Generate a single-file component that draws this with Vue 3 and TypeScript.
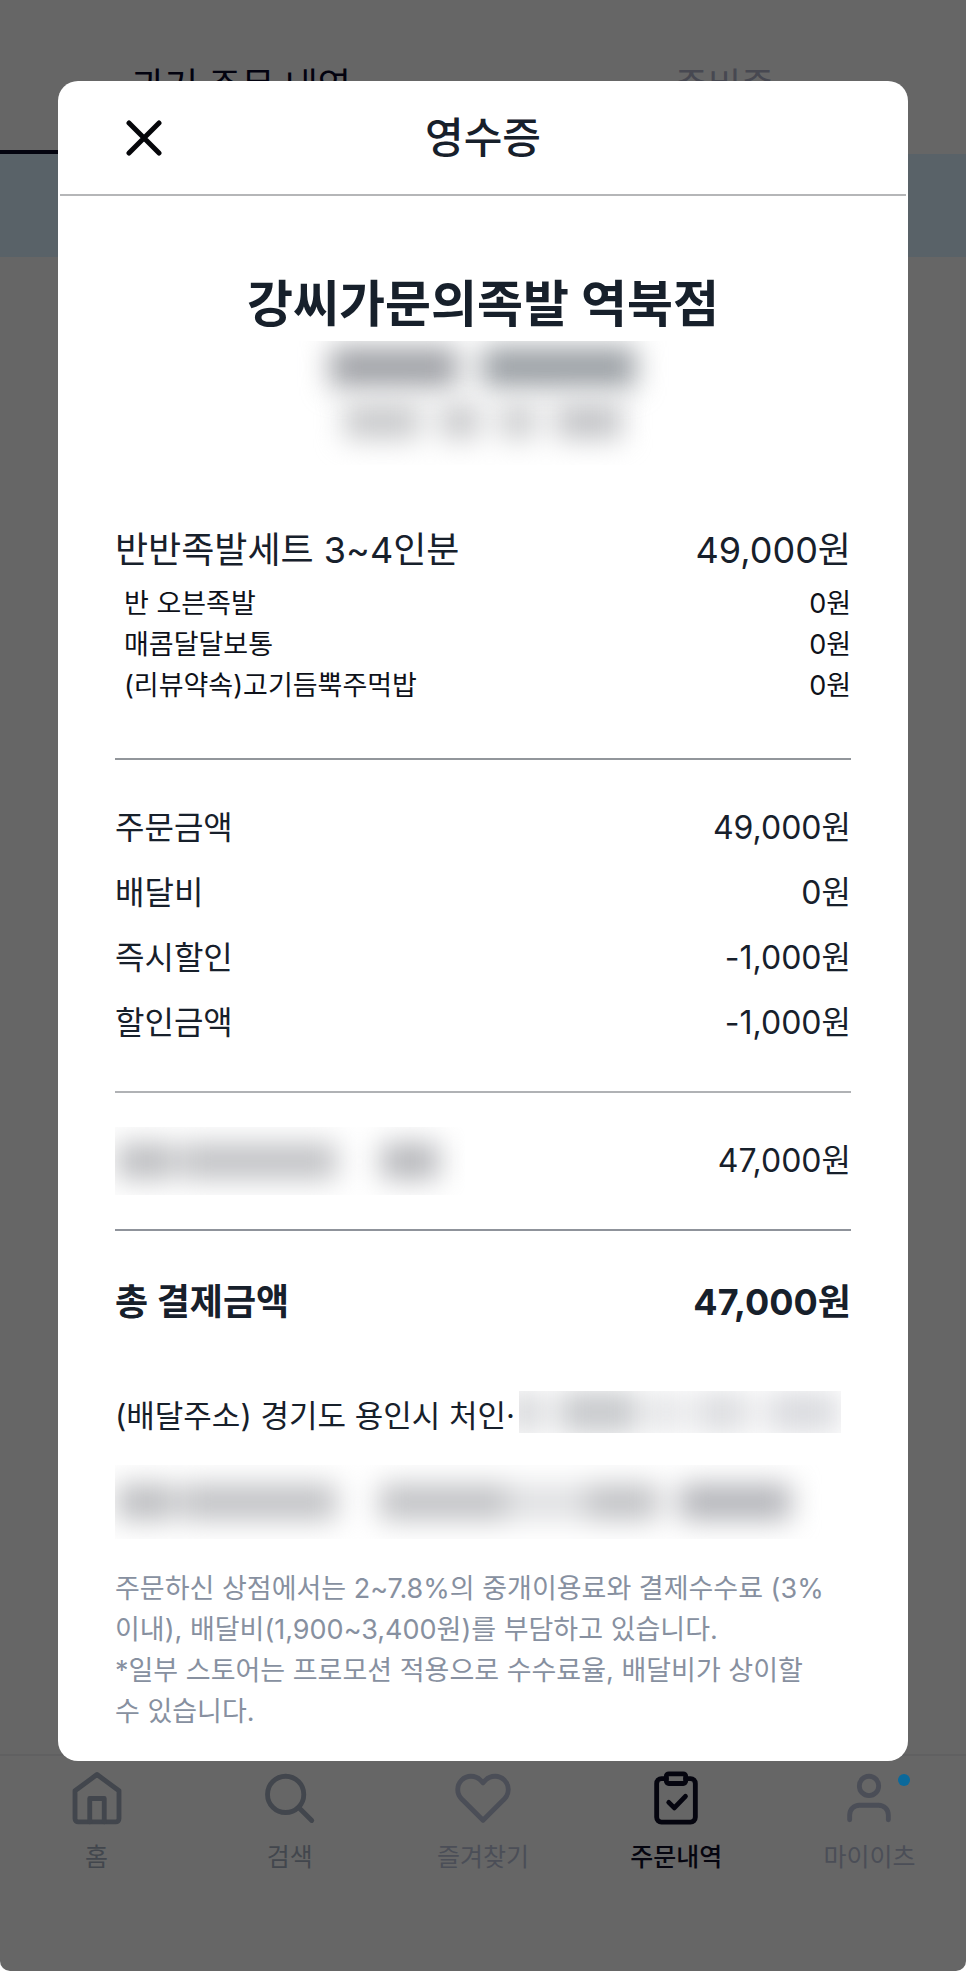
<script setup lang="ts">
interface Row { label: string; price: string }
interface Smudge { gap: number; width: number; shade: string }

const options: Row[] = [
  { label: '반 오븐족발', price: '0원' },
  { label: '매콤달달보통', price: '0원' },
  { label: '(리뷰약속)고기듬뿍주먹밥', price: '0원' },
]

const summary: Row[] = [
  { label: '주문금액', price: '49,000원' },
  { label: '배달비', price: '0원' },
  { label: '즉시할인', price: '-1,000원' },
  { label: '할인금액', price: '-1,000원' },
]

// Masked personal details, drawn as blurred bars
const orderNumber: Smudge[] = [
  { gap: 0, width: 128, shade: '#9fa1a6' },
  { gap: 24, width: 154, shade: '#999ea3' },
]
const orderDate: Smudge[] = [
  { gap: 0, width: 76, shade: '#c8c9cb' },
  { gap: 20, width: 40, shade: '#c8c9cb' },
  { gap: 20, width: 36, shade: '#cbccce' },
  { gap: 20, width: 66, shade: '#c2c3c6' },
]
const payMethod: Smudge[] = [
  { gap: 2, width: 58, shade: '#bbbcbf' },
  { gap: 6, width: 156, shade: '#c0c1c4' },
  { gap: 44, width: 58, shade: '#b4b5b9' },
]
const addressRest: Smudge[] = [
  { gap: -10, width: 34, shade: '#d6d7da' },
  { gap: 16, width: 80, shade: '#c7c9cc' },
  { gap: 14, width: 26, shade: '#dedfe2' },
  { gap: 14, width: 58, shade: '#dddee1' },
  { gap: 16, width: 72, shade: '#dadbdf' },
]
const payDetail: Smudge[] = [
  { gap: 2, width: 58, shade: '#bbbcbf' },
  { gap: 6, width: 156, shade: '#c0c1c4' },
  { gap: 42, width: 128, shade: '#c0c1c4' },
  { gap: 0, width: 80, shade: '#dfe0e2' },
  { gap: 0, width: 72, shade: '#c0c1c4' },
  { gap: 20, width: 112, shade: '#b2b3b8' },
]

function barStyle(s: Smudge) {
  return { marginLeft: s.gap + 'px', width: s.width + 'px', background: s.shade }
}
</script>

<template>
  <div class="app">
    <div class="screen">
      <div class="tabs">
        <button type="button" class="tab tab-on">과거 주문 내역</button>
        <button type="button" class="tab">준비중</button>
      </div>
      <div class="notice"></div>
      <div class="feed"></div>
      <nav class="nav">
        <a href="#home" class="nav-item dark">
          <svg class="icon" viewBox="0 0 24 24">
            <path d="M12 2.3 2.9 9v11.6a1.3 1.3 0 0 0 1.3 1.3h15.6a1.3 1.3 0 0 0 1.3-1.3V9z" />
            <path d="M9 21.9v-9.7h6v9.7" />
          </svg>
          <span>홈</span>
        </a>
        <a href="#search" class="nav-item dark">
          <svg class="icon" viewBox="0 0 24 24">
            <circle cx="10.2" cy="10.5" r="7.5" />
            <path d="m15.7 16 5.3 5.3" />
          </svg>
          <span>검색</span>
        </a>
        <a href="#favorites" class="nav-item">
          <svg class="icon" viewBox="0 0 24 24">
            <path d="M20.84 4.61a5.5 5.5 0 0 0-7.78 0L12 5.67l-1.06-1.06a5.5 5.5 0 0 0-7.78 7.78l1.06 1.06L12 21.23l7.78-7.78 1.06-1.06a5.5 5.5 0 0 0 0-7.78z" />
          </svg>
          <span>즐겨찾기</span>
        </a>
        <a href="#orders" class="nav-item current">
          <svg class="icon" viewBox="0 0 24 24">
            <path d="M16 4h2a2 2 0 0 1 2 2v14a2 2 0 0 1-2 2H6a2 2 0 0 1-2-2V6a2 2 0 0 1 2-2h2" />
            <rect x="8" y="2" width="8" height="4" rx="1" />
            <path d="m9 13.8 2.3 2.3 4.6-4.8" />
          </svg>
          <span>주문내역</span>
        </a>
        <a href="#my" class="nav-item">
          <span class="badge-box">
            <svg class="icon" viewBox="0 0 24 24">
              <circle cx="12" cy="7" r="4" />
              <path d="M20 21v-2a4 4 0 0 0-4-4H8a4 4 0 0 0-4 4v2" />
            </svg>
            <i class="dot"></i>
          </span>
          <span>마이이츠</span>
        </a>
      </nav>
    </div>

    <section class="modal" role="dialog" aria-labelledby="receipt-title">
      <header class="modal-head">
        <button type="button" class="close" aria-label="닫기">
          <svg viewBox="0 0 36 36"><path d="M3 3 33 33M33 3 3 33" /></svg>
        </button>
        <h1 id="receipt-title">영수증</h1>
      </header>

      <div class="body">
        <h2>강씨가문의족발 역북점</h2>
        <div class="mask order-mask">
          <div class="smudge strong"><i v-for="(s, i) in orderNumber" :key="i" :style="barStyle(s)"></i></div>
          <div class="smudge"><i v-for="(s, i) in orderDate" :key="i" :style="barStyle(s)"></i></div>
        </div>

        <div class="row item"><span>반반족발세트 3~4인분</span><span>49,000원</span></div>
        <div class="options">
          <div v-for="o in options" :key="o.label" class="row option">
            <span>{{ o.label }}</span><span>{{ o.price }}</span>
          </div>
        </div>

        <div class="summary">
          <div v-for="s in summary" :key="s.label" class="row">
            <span>{{ s.label }}</span><span>{{ s.price }}</span>
          </div>
        </div>

        <div class="row payment">
          <div class="mask pay-mask">
            <div class="smudge"><i v-for="(s, i) in payMethod" :key="i" :style="barStyle(s)"></i></div>
          </div>
          <span>47,000원</span>
        </div>

        <div class="row total"><span>총 결제금액</span><span>47,000원</span></div>

        <div class="address">
          <span>(배달주소) 경기도 용인시 처인·</span>
          <div class="mask address-mask">
            <div class="smudge"><i v-for="(s, i) in addressRest" :key="i" :style="barStyle(s)"></i></div>
          </div>
        </div>

        <div class="mask detail-mask">
          <div class="smudge"><i v-for="(s, i) in payDetail" :key="i" :style="barStyle(s)"></i></div>
        </div>

        <p class="notes">
          주문하신 상점에서는 2~7.8%의 중개이용료와 결제수수료 (3%<br />이내), 배달비(1,900~3,400원)를 부담하고 있습니다.<br />*일부 스토어는 프로모션 적용으로 수수료율, 배달비가 상이할<br />수 있습니다.
        </p>
      </div>
    </section>
  </div>
</template>

<style>
body { margin: 0; background: #fff; }
</style>

<style scoped>
.app {
  display: grid;
  min-height: 100vh;
  font-family: Inter, "Noto Sans CJK KR", sans-serif;
  color: #17202b;
}
.screen, .modal { grid-area: 1 / 1; min-width: 0; }
.screen {
  display: flex;
  flex-direction: column;
  background: #666;
  border-radius: 0 0 10px 10px;
}
button { font-family: inherit; background: none; border: 0; padding: 0; margin: 0; }
h1, h2, p { margin: 0; }

.tabs { display: flex; height: 154px; }
.tab {
  flex: 1;
  padding-top: 22px;
  font-size: 36px;
  line-height: 40px;
  color: #474851;
  border-bottom: 4px solid transparent;
}
.tab-on { color: #02020f; border-bottom-color: #04040f; }
.notice { height: 103px; background: #596268; }
.feed { flex: 1; }

.nav {
  display: flex;
  height: 202px;
  padding-top: 13px;
  border-top: 2px solid #606061;
}
.nav-item {
  flex: 1;
  display: flex;
  flex-direction: column;
  align-items: center;
  gap: 12px;
  font-size: 25px;
  line-height: 36px;
  color: #4b4e57;
  text-decoration: none;
}
.nav-item.dark { color: #42464d; }
.nav-item.current { color: #05050f; font-weight: 500; }
.icon {
  display: block;
  width: 58px;
  height: 58px;
  fill: none;
  stroke: currentColor;
  stroke-width: 2;
  stroke-linecap: round;
  stroke-linejoin: round;
}
.badge-box { position: relative; }
.dot {
  position: absolute;
  top: 5px;
  right: -12px;
  width: 12px;
  height: 12px;
  border-radius: 50%;
  background: #0b699b;
}

.modal {
  margin: 81px 58px 210px;
  background: #fff;
  border-radius: 20px;
}
.modal-head {
  display: grid;
  grid-template-columns: 1fr auto 1fr;
  align-items: center;
  height: 113px;
  margin: 0 2px;
  border-bottom: 2px solid #b5b6b8;
}
.modal-head h1 { font-size: 42px; line-height: 60px; font-weight: 500; }
.close { width: 36px; height: 36px; margin-left: 66px; }
.close svg { display: block; fill: none; stroke: #05060a; stroke-width: 5; stroke-linecap: round; }

.body { padding: 78px 57px 29px; }
.body h2 { font-size: 50px; line-height: 60px; font-weight: 700; text-align: center; }

.row { display: flex; justify-content: space-between; }
.item { margin-top: 60px; font-size: 36px; line-height: 50px; }
.options { padding: 8px 0 52px 9px; border-bottom: 2px solid #92969b; }
.option { font-size: 27px; line-height: 41px; color: #0e1119; }
.summary {
  padding: 35px 0 36px;
  font-size: 32px;
  line-height: 65px;
  border-bottom: 2px solid #b0b2b5;
}
.payment {
  padding: 34px 0;
  font-size: 32px;
  line-height: 68px;
  border-bottom: 2px solid #8f939b;
}
.total { margin-top: 46px; font-size: 36px; line-height: 50px; font-weight: 700; }
.address { display: flex; gap: 4px; margin-top: 64px; font-size: 31px; line-height: 50px; white-space: nowrap; }

.mask { overflow: hidden; }
.smudge { display: flex; height: 36px; filter: blur(14px); }
.smudge i { display: block; }
.order-mask {
  display: flex;
  flex-direction: column;
  align-items: center;
  gap: 16px;
  height: 118px;
  margin-top: 7px;
  padding-top: 6px;
}
.smudge.strong { height: 40px; }
.pay-mask { display: flex; align-items: center; width: 350px; height: 68px; }
.address-mask { flex: 1; max-width: 322px; height: 42px; }
.address-mask .smudge { height: 42px; }
.detail-mask { display: flex; align-items: center; height: 74px; margin-top: 24px; }

.notes { margin-top: 29px; font-size: 27px; line-height: 41px; color: #8790a0; white-space: nowrap; }
</style>
